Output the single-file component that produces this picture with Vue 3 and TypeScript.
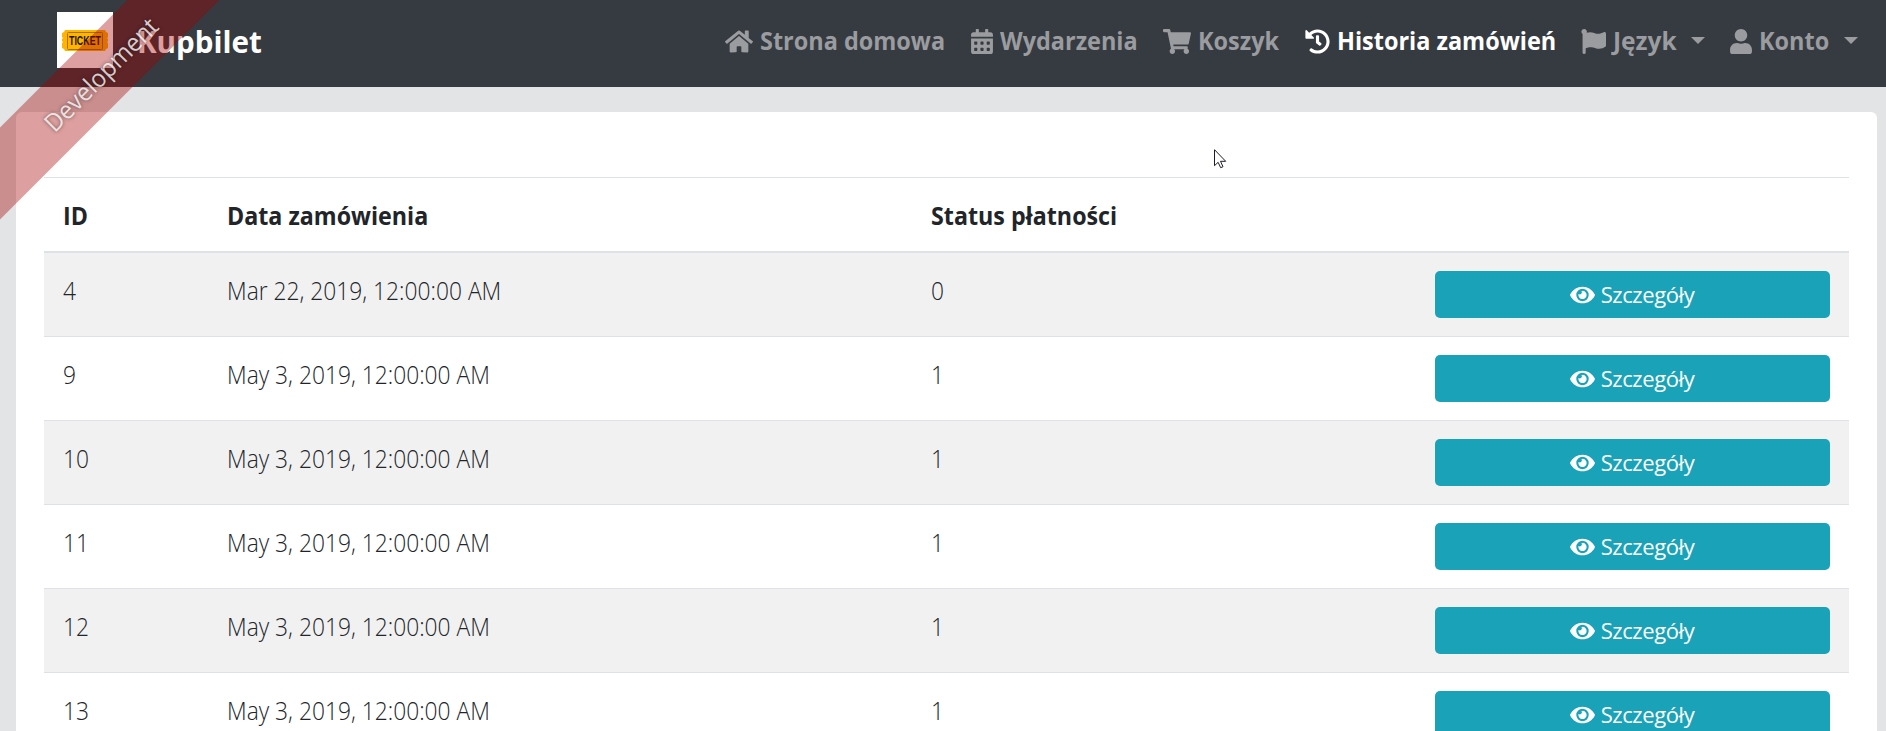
<script setup lang="ts">
interface NavItem {
  label: string
  icon: string
  viewBox: string
  iconWidth: number
  width: number
  active?: boolean
  dropdown?: boolean
}

interface Order {
  id: number
  date: string
  status: number
}

const calendarHoles = [
  [320, 268], [320, 396], [192, 268], [192, 396], [64, 268], [64, 396],
]
  .map(([x, y]) => `M${x} ${y}c0-6.6 5.4-12 12-12h40c6.6 0 12 5.4 12 12v40c0 6.6-5.4 12-12 12h-40c-6.6 0-12-5.4-12-12z`)
  .join('')

const navItems: NavItem[] = [
  {
    label: 'Strona domowa', viewBox: '0 0 576 512', iconWidth: 28, width: 245.5,
    icon: 'M280.37 148.26L96 300.11V464a16 16 0 0 0 16 16l112.06-.29a16 16 0 0 0 15.92-16V368a16 16 0 0 1 16-16h64a16 16 0 0 1 16 16v95.64a16 16 0 0 0 16 16.05L464 480a16 16 0 0 0 16-16V300L295.67 148.26a12.19 12.19 0 0 0-15.3 0zM571.6 251.47L488 182.56V44.05a12 12 0 0 0-12-12h-56a12 12 0 0 0-12 12v72.61L318.47 43a48 48 0 0 0-61 0L4.34 251.47a12 12 0 0 0-1.6 16.9l25.5 31A12 12 0 0 0 45.15 301l235.22-193.74a12.19 12.19 0 0 1 15.3 0L530.9 301a12 12 0 0 0 16.9-1.6l25.5-31a12 12 0 0 0-1.7-16.93z',
  },
  {
    label: 'Wydarzenia', viewBox: '0 0 448 512', iconWidth: 22, width: 192,
    icon: 'M0 464c0 26.5 21.5 48 48 48h352c26.5 0 48-21.5 48-48V192H0zM400 64h-48V16c0-8.8-7.2-16-16-16h-32c-8.8 0-16 7.2-16 16v48H160V16c0-8.8-7.2-16-16-16h-32c-8.8 0-16 7.2-16 16v48H48C21.5 64 0 85.5 0 112v48h448v-48c0-26.5-21.5-48-48-48z' + calendarHoles,
  },
  {
    label: 'Koszyk', viewBox: '0 0 576 512', iconWidth: 28, width: 142,
    icon: 'M528.12 301.319l47.273-208C578.806 78.301 567.391 64 551.99 64H159.208l-9.166-44.81C147.758 8.021 137.93 0 126.529 0H24C10.745 0 0 10.745 0 24v16c0 13.255 10.745 24 24 24h69.883l70.248 343.435C147.325 417.1 136 435.222 136 456c0 30.928 25.072 56 56 56s56-25.072 56-56c0-15.674-6.447-29.835-16.824-40h209.647C430.447 426.165 424 440.326 424 456c0 30.928 25.072 56 56 56s56-25.072 56-56c0-22.172-12.888-41.332-31.579-50.405l5.517-24.276c3.413-15.018-8.002-29.319-23.403-29.319H218.117l-6.545-32h293.145c11.206 0 20.92-7.754 23.403-18.681z',
  },
  {
    label: 'Historia zamówień', viewBox: '0 0 512 512', iconWidth: 25, width: 276.5, active: true,
    icon: 'M504 255.531c.253 136.64-111.18 248.372-247.82 248.468-59.015.042-113.223-20.53-155.822-54.911-11.077-8.94-11.905-25.541-1.839-35.607l11.267-11.267c8.609-8.609 22.353-9.551 31.891-1.984C173.062 425.135 212.781 440 256 440c101.705 0 184-82.311 184-184 0-101.705-82.311-184-184-184-48.814 0-93.149 18.969-126.068 49.932l50.754 50.754c10.08 10.08 2.941 27.314-11.313 27.314H24c-8.837 0-16-7.163-16-16V38.627c0-14.254 17.234-21.393 27.314-11.314l49.372 49.372C129.209 34.136 189.552 8 256 8c136.81 0 247.747 110.78 248 247.531zm-180.912 78.784l9.823-12.63c8.138-10.463 6.253-25.542-4.21-33.679L288 256.349V152c0-13.255-10.745-24-24-24h-16c-13.255 0-24 10.745-24 24v135.651l65.409 50.874c10.463 8.137 25.541 6.253 33.679-4.21z',
  },
  {
    label: 'Język', viewBox: '0 0 512 512', iconWidth: 25, width: 149, dropdown: true,
    icon: 'M349.565 98.783C295.978 98.783 251.721 64 184.348 64c-24.955 0-47.309 4.384-68.045 12.013a55.947 55.947 0 0 0 3.586-23.562C118.117 24.015 94.806 1.206 66.338.048 34.345-1.254 8 24.296 8 56c0 19.026 9.497 35.825 24 45.945V488c0 13.255 10.745 24 24 24h16c13.255 0 24-10.745 24-24v-94.4c28.311-12.064 63.582-22.122 114.435-22.122 53.588 0 97.844 34.783 165.217 34.783 48.169 0 86.667-16.294 122.505-40.858C506.84 359.452 512 349.571 512 339.045v-243.1c0-23.393-24.269-38.87-45.485-29.016-34.338 15.948-76.454 31.854-116.95 31.854z',
  },
  {
    label: 'Konto', viewBox: '0 0 448 512', iconWidth: 22, width: 128, dropdown: true,
    icon: 'M224 256c70.7 0 128-57.3 128-128S294.7 0 224 0 96 57.3 96 128s57.3 128 128 128zm89.6 32h-16.7c-22.2 10.2-46.9 16-72.9 16s-50.6-5.8-72.9-16h-16.7C60.2 288 0 348.2 0 422.4V464c0 26.5 21.5 48 48 48h352c26.5 0 48-21.5 48-48v-41.6c0-74.2-60.2-134.4-134.4-134.4z',
  },
]

const orders: Order[] = [
  { id: 4, date: 'Mar 22, 2019, 12:00:00 AM', status: 0 },
  { id: 9, date: 'May 3, 2019, 12:00:00 AM', status: 1 },
  { id: 10, date: 'May 3, 2019, 12:00:00 AM', status: 1 },
  { id: 11, date: 'May 3, 2019, 12:00:00 AM', status: 1 },
  { id: 12, date: 'May 3, 2019, 12:00:00 AM', status: 1 },
  { id: 13, date: 'May 3, 2019, 12:00:00 AM', status: 1 },
]
</script>

<template>
  <div class="page">
    <header class="navbar">
      <a class="brand">
        <svg class="logo" viewBox="0 0 56 56">
          <rect width="56" height="56" fill="#fff" />
          <path d="M8 18h40l1 2 2 1v4l-1 1 1 1v2l-1 1 1 1v5l-2 1-1 2H8l-1-2-2-1v-5l1-1-1-1v-2l1-1-1-1v-4l2-1z" fill="#ffb400" />
          <rect x="10.5" y="20.5" width="35" height="17" rx="1" fill="none" stroke="#a87200" />
          <text x="12" y="33.2" textLength="32" lengthAdjust="spacingAndGlyphs">TICKET</text>
        </svg>
        <span class="brand-name">Kupbilet</span>
      </a>
      <nav class="nav">
        <a
          v-for="item in navItems"
          :key="item.label"
          class="nav-link"
          :class="{ active: item.active }"
          :style="{ width: item.width + 'px' }"
        >
          <svg class="nav-icon" :viewBox="item.viewBox" :style="{ width: item.iconWidth + 'px' }">
            <path :d="item.icon" fill="currentColor" fill-rule="evenodd" />
          </svg>
          <span class="nav-label">{{ item.label }}</span>
          <span v-if="item.dropdown" class="caret"></span>
        </a>
      </nav>
    </header>

    <main class="card">
      <div class="table">
        <div class="row head">
          <span class="heading">ID</span>
          <span class="heading">Data zamówienia</span>
          <span class="heading">Status płatności</span>
          <span></span>
        </div>
        <div v-for="order in orders" :key="order.id" class="row">
          <span class="cell">{{ order.id }}</span>
          <span class="cell">{{ order.date }}</span>
          <span class="cell">{{ order.status }}</span>
          <button class="details" type="button">
            <svg class="eye" viewBox="0 0 576 512">
              <path fill="currentColor" d="M572.52 241.4C518.29 135.59 410.93 64 288 64S57.68 135.64 3.48 241.41a32.35 32.35 0 0 0 0 29.19C57.71 376.41 165.07 448 288 448s230.32-71.64 284.52-177.41a32.35 32.35 0 0 0 0-29.19zM288 400a144 144 0 1 1 144-144 143.93 143.93 0 0 1-144 144zm0-240a95.31 95.31 0 0 0-25.31 3.79 47.85 47.85 0 0 1-66.9 66.9A95.78 95.78 0 1 0 288 160z" />
            </svg>
            <span>Szczegóły</span>
          </button>
        </div>
      </div>
    </main>

    <div class="ribbon"><span>Development</span></div>

    <svg class="pointer" viewBox="0 0 13 20">
      <path d="M.5.7v16l3.6-3.4 2.6 5.4 2.3-1-2.5-5.4h5.2z" fill="#fff" stroke="#1c1c28" />
    </svg>
  </div>
</template>

<style>
body {
  background: #e3e4e6;
  overflow: hidden;
}
</style>

<style scoped>
.page {
  position: relative;
  height: 731px;
  overflow: hidden;
  font-family: "Open Sans", "Noto Sans", sans-serif;
  font-size: 25px;
  color: #212529;
}

.navbar {
  display: flex;
  justify-content: space-between;
  height: 87px;
  box-sizing: border-box;
  padding: 0 28px 0 57px;
  background: #363a41;
}

.brand {
  display: flex;
  gap: 24px;
  padding-top: 12px;
  color: #fff;
}

.logo {
  width: 56px;
  height: 56px;
}

.logo text {
  font: bold 12px "Liberation Sans", sans-serif;
  fill: #1d1400;
}

.brand-name {
  font-size: 30px;
  font-weight: 700;
  line-height: 60px;
  transform: scaleX(0.985);
  transform-origin: left;
}

.nav {
  display: flex;
  padding-top: 29px;
}

.nav-link {
  display: flex;
  align-items: flex-start;
  flex: none;
  gap: 7px;
  color: #9a9c9f;
  font-weight: 700;
  white-space: nowrap;
}

.nav-link.active {
  color: #fff;
}

.nav-icon {
  flex: none;
  height: 25px;
}

.nav-label {
  line-height: 23px;
  transform: scaleX(0.938);
  transform-origin: left;
}

.nav-link:nth-last-child(2) .nav-label {
  transform: scaleX(0.98);
}

.caret {
  margin: 8px 0 0 auto;
  border-top: 7.5px solid;
  border-left: 7.5px solid transparent;
  border-right: 7.5px solid transparent;
}

.nav-link:nth-last-child(2) .caret {
  margin-right: 25px;
}

.card {
  height: 800px;
  margin: 25px 9px 0 16px;
  padding: 65px 28px 0;
  border-radius: 6px;
  background: #fff;
}

.row {
  display: grid;
  grid-template-columns: 164px 704px 504px 395px;
  height: 83px;
  padding: 0 19px 0 18.5px;
  border-top: 1px solid #dee2e6;
}

.row.head {
  height: 73px;
  border-bottom: 2px solid #dee2e6;
}

.row.head + .row {
  border-top: 0;
}

.row:nth-child(even) {
  background: #f1f1f1;
}

.heading {
  font-weight: 700;
  line-height: 74px;
  transform: scaleX(0.93);
  transform-origin: left;
}

.cell {
  font-weight: 300;
  line-height: 75px;
  transform: scaleX(0.911);
  transform-origin: left;
}

.details {
  display: flex;
  align-items: center;
  justify-content: center;
  gap: 6px;
  height: 47px;
  margin: 18px 0 0;
  padding: 0;
  border: 0;
  border-radius: 5px;
  background: #19a2b8;
  color: #fff;
  font-family: inherit;
  font-size: 22px;
  letter-spacing: -0.4px;
}

.details span {
  margin-top: -1px;
}

.eye {
  width: 25px;
  height: 22px;
}

.ribbon {
  position: absolute;
  top: 54px;
  left: -113.5px;
  width: 400px;
  height: 65px;
  background: rgba(165, 0, 0, 0.375);
  color: rgba(255, 255, 255, 0.8);
  line-height: 66px;
  text-align: center;
  text-shadow: 0 0 4px rgba(0, 0, 0, 0.5);
  transform: rotate(-45deg);
}

.ribbon span {
  display: inline-block;
  margin-left: 37px;
  transform: scaleX(0.95);
}

.pointer {
  position: absolute;
  top: 149px;
  left: 1214px;
  width: 13px;
  height: 20px;
}
</style>
